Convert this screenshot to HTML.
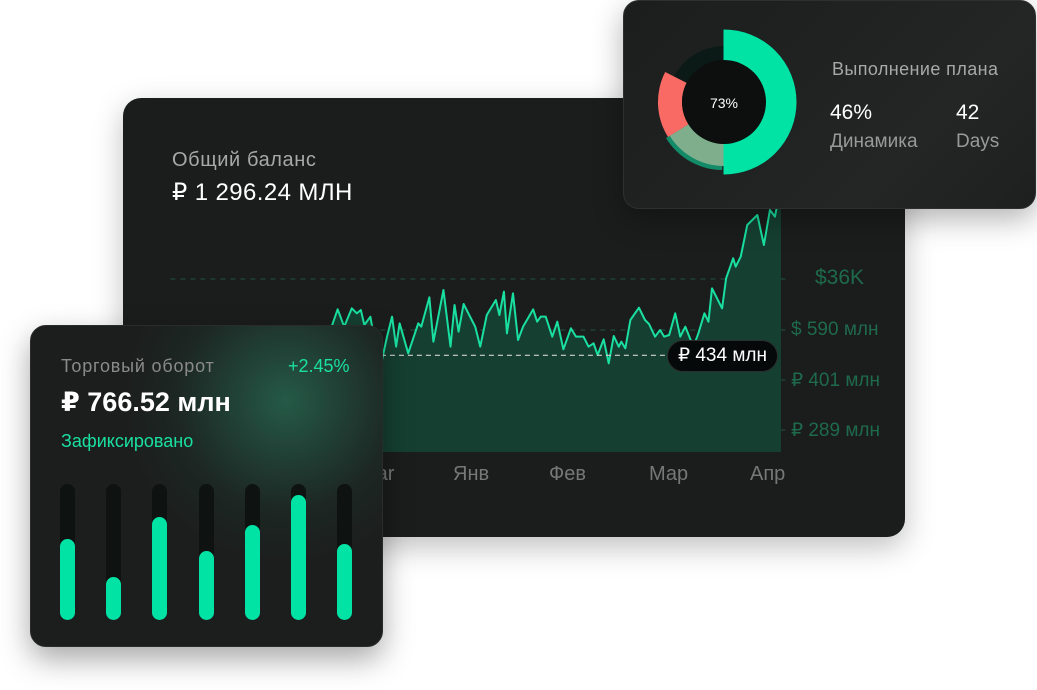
<!DOCTYPE html>
<html><head><meta charset="utf-8"><style>
*{margin:0;padding:0;box-sizing:border-box}
body{width:1037px;height:690px;background:#fff;position:relative;overflow:hidden;font-family:"Liberation Sans","DejaVu Sans",sans-serif}
.abs{position:absolute}
.main{left:123px;top:98px;width:782px;height:439px;background:#1b1c1c;border-radius:18px;box-shadow:0 10px 30px rgba(0,0,0,.25)}
.card{left:30px;top:325px;width:353px;height:322px;border-radius:16px;background:radial-gradient(circle at 255px 75px,rgba(40,110,85,.75),rgba(30,60,50,.3) 110px,rgba(27,28,28,0) 170px),#1c1d1d;box-shadow:0 12px 30px rgba(0,0,0,.35);border:1px solid #2a2b2b}
.top{left:623px;top:0;width:413px;height:209px;border-radius:16px;background:linear-gradient(135deg,#1c1d1d,#232625 70%,#1e2020);box-shadow:0 10px 30px rgba(0,0,0,.3);border:1px solid #2e3030}
.t{position:absolute;white-space:nowrap}
.bar{position:absolute;width:15px;border-radius:8px}
</style></head><body>
<div class="abs main"></div>
<div class="t" style="left:172px;top:149px;font-size:20px;letter-spacing:.6px;color:#a8a8a8">Общий баланс</div>
<div class="t" style="left:172px;top:178px;font-size:24px;letter-spacing:.4px;color:#fff">₽ 1 296.24 МЛН</div>

<svg class="abs" style="left:120px;top:200px" width="790" height="300" viewBox="0 0 1568 900" preserveAspectRatio="none">
<g stroke="#1f4a3b" stroke-width="1.2" stroke-dasharray="5 5">
<line x1="100" y1="237" x2="1330" y2="237" vector-effect="non-scaling-stroke"/>
<line x1="100" y1="390" x2="1330" y2="390" vector-effect="non-scaling-stroke"/>
<line x1="100" y1="540" x2="1330" y2="540" vector-effect="non-scaling-stroke"/>
<line x1="100" y1="690" x2="1330" y2="690" vector-effect="non-scaling-stroke"/>
</g>
<polygon fill="#153f31" points="420,756 420,380 432,328 445,380 460,325 470,340 478,330 485,375 497,350 505,420 520,480 530,410 540,350 548,440 555,370 572,460 592,370 598,380 614,292 622,425 642,270 656,440 664,315 672,395 682,312 705,380 715,440 728,345 746,300 753,345 762,275 768,400 780,280 790,420 800,380 820,328 828,365 835,350 845,350 858,410 868,365 880,448 895,385 905,410 920,410 930,440 940,430 948,465 960,418 970,490 980,408 990,440 995,425 1003,445 1013,360 1030,323 1042,360 1050,372 1062,410 1072,390 1080,410 1090,405 1102,340 1112,410 1122,380 1138,440 1148,400 1160,340 1168,365 1175,265 1195,325 1203,235 1217,175 1222,200 1232,170 1245,75 1265,45 1278,135 1290,30 1300,50 1305,10 1312,0 1312,756"/>
<polyline fill="none" stroke="#19e0a0" stroke-width="2" vector-effect="non-scaling-stroke" stroke-linejoin="round" points="420,380 432,328 445,380 460,325 470,340 478,330 485,375 497,350 505,420 520,480 530,410 540,350 548,440 555,370 572,460 592,370 598,380 614,292 622,425 642,270 656,440 664,315 672,395 682,312 705,380 715,440 728,345 746,300 753,345 762,275 768,400 780,280 790,420 800,380 820,328 828,365 835,350 845,350 858,410 868,365 880,448 895,385 905,410 920,410 930,440 940,430 948,465 960,418 970,490 980,408 990,440 995,425 1003,445 1013,360 1030,323 1042,360 1050,372 1062,410 1072,390 1080,410 1090,405 1102,340 1112,410 1122,380 1138,440 1148,400 1160,340 1168,365 1175,265 1195,325 1203,235 1217,175 1222,200 1232,170 1245,75 1265,45 1278,135 1290,30 1300,50 1305,10 1312,0"/>
<line x1="500" y1="466" x2="1090" y2="466" stroke="#cfd2d0" stroke-width="1.2" stroke-dasharray="5 4" vector-effect="non-scaling-stroke"/>
</svg>
<div class="abs" style="left:667px;top:340px;width:111px;height:32px;border-radius:16px;background:#06090a;border:1px solid #2b2e2e;color:#fff;font-size:19px;line-height:30px;text-align:center">₽ 434 млн</div>
<div class="t" style="left:815px;top:266px;font-size:21px;color:#1e6a4d">$36K</div>
<div class="t" style="left:791px;top:319px;font-size:19px;color:#1e6a4d">$ 590 млн</div>
<div class="t" style="left:791px;top:369px;font-size:19px;color:#1e6a4d">₽ 401 млн</div>
<div class="t" style="left:791px;top:419px;font-size:19px;color:#1e6a4d">₽ 289 млн</div>
<div class="t" style="left:360px;top:463px;font-size:20px;color:#777">Mar</div>
<div class="t" style="left:453px;top:463px;font-size:20px;color:#777">Янв</div>
<div class="t" style="left:549px;top:463px;font-size:20px;color:#777">Фев</div>
<div class="t" style="left:649px;top:463px;font-size:20px;color:#777">Мар</div>
<div class="t" style="left:750px;top:463px;font-size:20px;color:#777">Апр</div>

<div class="abs card"></div>
<div class="t" style="left:61px;top:356px;font-size:18px;letter-spacing:.8px;color:#8a8a8a">Торговый оборот</div>
<div class="t" style="left:288px;top:356px;font-size:18px;color:#19e0a0">+2.45%</div>
<div class="t" style="left:61px;top:387px;font-size:27px;font-weight:bold;color:#fff">₽ 766.52 млн</div>
<div class="t" style="left:61px;top:431px;font-size:18px;color:#19e0a0">Зафиксировано</div>
<div class="bar" style="left:60px;top:484px;height:136px;background:#0e1211"></div>
<div class="bar" style="left:106px;top:484px;height:136px;background:#0e1211"></div>
<div class="bar" style="left:152px;top:484px;height:136px;background:#0e1211"></div>
<div class="bar" style="left:199px;top:484px;height:136px;background:#0e1211"></div>
<div class="bar" style="left:245px;top:484px;height:136px;background:#0e1211"></div>
<div class="bar" style="left:291px;top:484px;height:136px;background:#0e1211"></div>
<div class="bar" style="left:337px;top:484px;height:136px;background:#0e1211"></div>
<div class="bar" style="left:60px;top:539px;height:81px;background:#00e3a5"></div>
<div class="bar" style="left:106px;top:577px;height:43px;background:#00e3a5"></div>
<div class="bar" style="left:152px;top:517px;height:103px;background:#00e3a5"></div>
<div class="bar" style="left:199px;top:551px;height:69px;background:#00e3a5"></div>
<div class="bar" style="left:245px;top:525px;height:95px;background:#00e3a5"></div>
<div class="bar" style="left:291px;top:495px;height:125px;background:#00e3a5"></div>
<div class="bar" style="left:337px;top:544px;height:76px;background:#00e3a5"></div>

<div class="abs top"></div>
<svg class="abs" style="left:0;top:0" width="1037" height="690">
<circle cx="724" cy="102" r="56" fill="#0b1a16"/>
<path d="M722,170 A66,66 0 0 1 666,138 L688.4,124.3 A42,42 0 0 0 724,144 Z" fill="#138a68"/>
<path d="M724,166 A64,64 0 0 1 669.7,135.9 L688.4,124.3 A42,42 0 0 0 724,144 Z" fill="#7fae8c"/>
<path d="M668,137 A66,66 0 0 1 665.2,72 L686.6,82.9 A42,42 0 0 0 688.4,124.3 Z" fill="#fa6a64"/>
<path d="M724,30 A72,72 0 0 1 724,174 L724,144 A42,42 0 0 0 724,60 Z" fill="#00e3a5" stroke="#00e3a5" stroke-width="1" stroke-linejoin="round"/>
<circle cx="724" cy="102" r="42" fill="#0c0f0e"/>
<text x="724" y="108" font-size="14" fill="#fff" text-anchor="middle" font-family="Liberation Sans, sans-serif">73%</text>
</svg>
<div class="t" style="left:832px;top:59px;font-size:18px;letter-spacing:.4px;color:#a8a8a8">Выполнение плана</div>
<div class="t" style="left:830px;top:101px;font-size:21px;color:#fff">46%</div>
<div class="t" style="left:956px;top:101px;font-size:21px;color:#fff">42</div>
<div class="t" style="left:830px;top:131px;font-size:19px;color:#999">Динамика</div>
<div class="t" style="left:956px;top:131px;font-size:19px;color:#999">Days</div>
</body></html>
